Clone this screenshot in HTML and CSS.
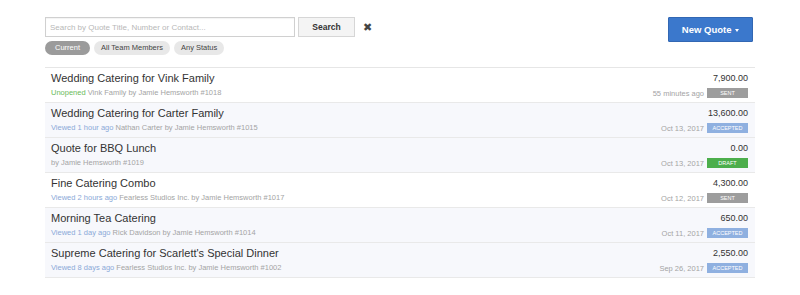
FILE: index.html
```html
<!DOCTYPE html>
<html>
<head>
<meta charset="utf-8">
<link rel="stylesheet" href="styles.css">
</head>
<body>
<div class="page">
  <div class="toolbar">
    <div class="search-area">
      <div class="search-row">
        <input class="search-input" type="text" placeholder="Search by Quote Title, Number or Contact...">
        <button class="search-btn">Search</button>
        <span class="clear">✖</span>
      </div>
      <div class="pills">
        <span class="pill pill-active">Current</span>
        <span class="pill">All Team Members</span>
        <span class="pill">Any Status</span>
      </div>
    </div>
    <button class="new-quote">New Quote <span class="caret"></span></button>
  </div>
  <div class="list">
    <div class="row">
      <div class="left">
        <div class="title">Wedding Catering for Vink Family</div>
        <div class="sub"><span class="unopened">Unopened</span> Vink Family by Jamie Hemsworth #1018</div>
      </div>
      <div class="right">
        <div class="amount">7,900.00</div>
        <div class="meta"><span class="date">55 minutes ago</span><span class="badge sent">SENT</span></div>
      </div>
    </div>
    <div class="row shade">
      <div class="left">
        <div class="title">Wedding Catering for Carter Family</div>
        <div class="sub"><span class="viewed">Viewed 1 hour ago</span> Nathan Carter by Jamie Hemsworth #1015</div>
      </div>
      <div class="right">
        <div class="amount">13,600.00</div>
        <div class="meta"><span class="date">Oct 13, 2017</span><span class="badge accepted">ACCEPTED</span></div>
      </div>
    </div>
    <div class="row shade">
      <div class="left">
        <div class="title">Quote for BBQ Lunch</div>
        <div class="sub">by Jamie Hemsworth #1019</div>
      </div>
      <div class="right">
        <div class="amount">0.00</div>
        <div class="meta"><span class="date">Oct 13, 2017</span><span class="badge draft">DRAFT</span></div>
      </div>
    </div>
    <div class="row">
      <div class="left">
        <div class="title">Fine Catering Combo</div>
        <div class="sub"><span class="viewed">Viewed 2 hours ago</span> Fearless Studios Inc. by Jamie Hemsworth #1017</div>
      </div>
      <div class="right">
        <div class="amount">4,300.00</div>
        <div class="meta"><span class="date">Oct 12, 2017</span><span class="badge sent">SENT</span></div>
      </div>
    </div>
    <div class="row shade">
      <div class="left">
        <div class="title">Morning Tea Catering</div>
        <div class="sub"><span class="viewed">Viewed 1 day ago</span> Rick Davidson by Jamie Hemsworth #1014</div>
      </div>
      <div class="right">
        <div class="amount">650.00</div>
        <div class="meta"><span class="date">Oct 11, 2017</span><span class="badge accepted">ACCEPTED</span></div>
      </div>
    </div>
    <div class="row shade">
      <div class="left">
        <div class="title">Supreme Catering for Scarlett's Special Dinner</div>
        <div class="sub"><span class="viewed">Viewed 8 days ago</span> Fearless Studios Inc. by Jamie Hemsworth #1002</div>
      </div>
      <div class="right">
        <div class="amount">2,550.00</div>
        <div class="meta"><span class="date">Sep 26, 2017</span><span class="badge accepted">ACCEPTED</span></div>
      </div>
    </div>
  </div>
</div>
</body>
</html>
```
FILE: styles.css
```css
* { box-sizing: border-box; }
html, body { margin: 0; padding: 0; background: #fff; }
body {
  font-family: "Liberation Sans", Arial, sans-serif;
  color: #333;
}
.page {
  width: 710px;
  margin-left: 45px;
  padding-top: 17px;
}
.toolbar {
  display: flex;
  justify-content: space-between;
  align-items: flex-start;
  height: 50px;
}
.search-row {
  display: flex;
  align-items: center;
}
.search-input {
  width: 250px;
  height: 20px;
  border: 1px solid #d0d0d0;
  padding: 0 4px;
  font-family: inherit;
  font-size: 8px;
  color: #333;
  outline: none;
  box-shadow: inset 0 1px 1px rgba(0,0,0,0.05);
}
.search-input::placeholder { color: #b8b8b8; }
.search-btn {
  margin-left: 3px;
  width: 57px;
  height: 20px;
  border: 1px solid #d6d6d6;
  background: #f4f4f4;
  font-family: inherit;
  font-size: 8.5px;
  font-weight: bold;
  color: #333;
  padding: 0;
}
.clear {
  margin-left: 8px;
  font-size: 11px;
  color: #444;
}
.pills {
  display: flex;
  gap: 4px;
  margin-top: 4px;
}
.pill {
  display: inline-block;
  height: 14px;
  line-height: 14px;
  padding: 0 7px;
  border-radius: 7px;
  background: #e8e8e8;
  font-size: 7.5px;
  color: #444;
}
.pill-active {
  background: #9b9b9b;
  color: #fff;
  padding: 0 10px;
}
.new-quote {
  margin-right: 2px;
  width: 85px;
  height: 25px;
  background: #3b78cc;
  border: 1px solid #3267b3;
  color: #fff;
  font-family: inherit;
  font-size: 9.5px;
  font-weight: bold;
  padding: 0;
  border-radius: 1px;
}
.caret {
  display: inline-block;
  width: 0;
  height: 0;
  border-left: 2.5px solid transparent;
  border-right: 2.5px solid transparent;
  border-top: 3px solid #fff;
  vertical-align: middle;
  margin-left: 1px;
}
.list {
  border-top: 1px solid #e6e6e6;
}
.row {
  display: flex;
  justify-content: space-between;
  height: 35px;
  padding: 4px 7px 0 6px;
  border-bottom: 1px solid #e9e9e9;
}
.row.shade { background: #f7f8fc; }
.title {
  font-size: 11px;
  line-height: 13px;
  color: #333;
}
.sub {
  font-size: 7.5px;
  line-height: 12px;
  margin-top: 2px;
  color: #a4a4a4;
}
.unopened { color: #6cbb5a; }
.viewed { color: #8aa9d8; }
.right {
  display: flex;
  flex-direction: column;
  align-items: flex-end;
}
.amount {
  font-size: 9px;
  line-height: 13px;
  color: #333;
}
.meta {
  display: flex;
  align-items: center;
  margin-top: 2px;
  height: 12px;
}
.date {
  font-size: 7.5px;
  color: #a4a4a4;
  margin-right: 3px;
}
.badge {
  display: inline-block;
  width: 41px;
  height: 10px;
  line-height: 10px;
  text-align: center;
  font-size: 5.5px;
  color: #fff;
}
.sent { background: #9d9d9d; }
.accepted { background: #8fb0e0; }
.draft { background: #4cae4c; }
```
